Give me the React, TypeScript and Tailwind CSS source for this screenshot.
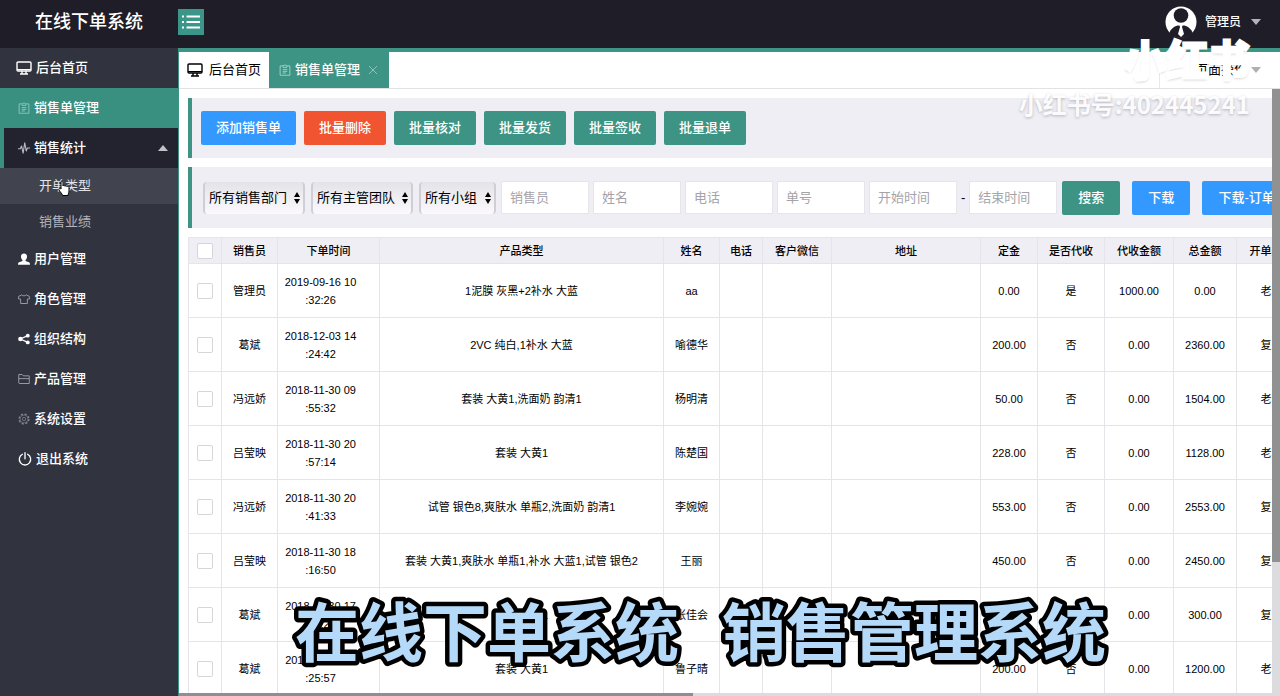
import React, { useState } from "react";
import clsx from "clsx";

type IconProps = { className?: string };

const MonitorIcon = ({ className }: IconProps) => (
  <svg className={className} viewBox="0 0 16 16" fill="none" stroke="currentColor" strokeWidth="1.4">
    <rect x="1" y="2" width="14" height="9" rx="1" />
    <path d="M1 9.6h14M6 11v2.4M10 11v2.4M4 14h8" />
  </svg>
);

const ClipboardIcon = ({ className }: IconProps) => (
  <svg className={className} viewBox="0 0 16 16" fill="none" stroke="currentColor" strokeWidth="1.2">
    <path d="M5 2.5H1.500v12.500h13V2.500H11" />
    <path d="M5.500 4.500V2h1.500L8 .8 9 2h1.500v2.500zM5 7.500h6M5 9.800h6M5 12h4" />
  </svg>
);

const PulseIcon = ({ className }: IconProps) => (
  <svg className={className} viewBox="0 0 16 16" fill="none" stroke="currentColor" strokeWidth="1.500" strokeLinejoin="round">
    <path d="M0 9h3l1.800-3.500L6.800 15 9 1l2 11 1.500-4H16" />
  </svg>
);

const UserIcon = ({ className }: IconProps) => (
  <svg className={className} viewBox="0 0 16 16" fill="currentColor">
    <path d="M8 .5C5.200.5 3.900 2.400 4 5c.1 2 .9 3.500 2 4.400v1.400L1.500 12.300C.5 12.700 0 13.600 0 15.500h16c0-1.900-.5-2.800-1.500-3.200L10 10.800V9.400c1.100-.9 1.900-2.400 2-4.400C12.100 2.400 10.800.5 8 .5z" />
  </svg>
);

const ShirtIcon = ({ className }: IconProps) => (
  <svg className={className} viewBox="0 0 16 16" fill="none" stroke="currentColor" strokeWidth="1.200" strokeLinejoin="round">
    <path d="M5 2.500L.8 4.500v3.500h2.700v6h9v-6h2.700V4.500L11 2.500C10 4.200 6 4.200 5 2.500z" />
  </svg>
);

const ShareIcon = ({ className }: IconProps) => (
  <svg className={className} viewBox="0 0 16 16" fill="currentColor">
    <path d="M3 8l10-4.500M3 8l10 4.500" stroke="currentColor" strokeWidth="1.800" />
    <circle cx="3.200" cy="8" r="3" />
    <circle cx="13" cy="3.500" r="2.600" />
    <circle cx="13" cy="12.500" r="2.600" />
  </svg>
);

const FolderIcon = ({ className }: IconProps) => (
  <svg className={className} viewBox="0 0 16 16" fill="none" stroke="currentColor" strokeWidth="1.200" strokeLinejoin="round">
    <path d="M1 13V2h4.500L7 3.800h8V14H2a1 1 0 0 1-1-1zM1 7.500h14" />
  </svg>
);

const GearIcon = ({ className }: IconProps) => (
  <svg className={className} viewBox="0 0 16 16" fill="none" stroke="currentColor">
    <circle cx="8" cy="8" r="6.500" strokeWidth="1.800" strokeDasharray="2.900 2.200" />
    <circle cx="8" cy="8" r="5.200" strokeWidth=".8" />
    <circle cx="8" cy="8" r="2.200" />
  </svg>
);

const PowerIcon = ({ className }: IconProps) => (
  <svg className={className} viewBox="0 0 16 16" fill="none" stroke="currentColor" strokeWidth="1.500" strokeLinecap="round">
    <path d="M5 2.600a6.500 6.500 0 1 0 6 0M8 .8v7" />
  </svg>
);

const ListIcon = ({ className }: IconProps) => (
  <svg className={className} viewBox="0 0 18 14" fill="none" stroke="currentColor" strokeWidth="1.800">
    <path d="M0 1.500h2M0 7h2M0 12.500h2M4.500 1.500H18M4.500 7H18M4.500 12.500H18" />
  </svg>
);

const AvatarIcon = ({ className }: IconProps) => (
  <svg className={className} viewBox="0 0 32 32">
    <circle cx="16" cy="16" r="15.500" fill="#fff" />
    <path d="M8 30c-2-1-3-2-3.500-3 1-4 4.500-6.500 8-7.500h7c3.500 1 7 3.500 8 7.500-.5 1-1.500 2-3.500 3-5 2.500-11 2.500-16 0z" fill="#1f1d28" />
    <circle cx="16" cy="9.500" r="7.300" fill="#1f1d28" />
    <path d="M14 18h4l-1 3 2 7-3 3-3-3 2-7z" fill="#fff" />
  </svg>
);

const HandCursor = ({ className }: IconProps) => (
  <svg className={className} viewBox="0 0 14 16" fill="#fff" stroke="#000" strokeWidth="1" strokeLinejoin="round">
    <path d="M4 9V2c0-1.500 2-1.500 2 0v4c0-1 2-1 2 .3 0-1 2-1 2 .4 0-1 2-.8 2 .4V11c0 2-1 2.500-1 4.500H5.500c0-1.500-2-3-3.500-5.500-.8-1.500.8-2 2-1z" />
  </svg>
);

const menu = [
  { label: "用户管理", icon: UserIcon, tone: "size-3 text-white" },
  { label: "角色管理", icon: ShirtIcon, tone: "size-3 text-[#a3a4ad]" },
  { label: "组织结构", icon: ShareIcon, tone: "size-3 text-white" },
  { label: "产品管理", icon: FolderIcon, tone: "size-3 text-[#a3a4ad]" },
  { label: "系统设置", icon: GearIcon, tone: "size-3 text-[#85868f]" },
  { label: "退出系统", icon: PowerIcon, tone: "size-3.5 text-white" },
];

const actions = [
  { label: "添加销售单", color: "bg-[#3399ff]" },
  { label: "批量删除", color: "bg-[#f05430]" },
  { label: "批量核对", color: "bg-[#3e9484]" },
  { label: "批量发货", color: "bg-[#3e9484]" },
  { label: "批量签收", color: "bg-[#3e9484]" },
  { label: "批量退单", color: "bg-[#3e9484]" },
];

const columns = [
  { label: "销售员", width: "w-14" },
  { label: "下单时间", width: "w-[102px]" },
  { label: "产品类型", width: "w-[284px]" },
  { label: "姓名", width: "w-14" },
  { label: "电话", width: "w-[43px]" },
  { label: "客户微信", width: "w-[69px]" },
  { label: "地址", width: "w-[149px]" },
  { label: "定金", width: "w-[57px]" },
  { label: "是否代收", width: "w-[67px]" },
  { label: "代收金额", width: "w-[69px]" },
  { label: "总金额", width: "w-[63px]" },
  { label: "开单类型", width: "w-[70px]" },
];

const orders = [
  ["管理员", "2019-09-16 10:32:26", "1泥膜 灰黑+2补水 大蓝", "aa", "", "", "", "0.00", "是", "1000.00", "0.00", "老单"],
  ["葛斌", "2018-12-03 14:24:42", "2VC 纯白,1补水 大蓝", "喻德华", "", "", "", "200.00", "否", "0.00", "2360.00", "复购"],
  ["冯远娇", "2018-11-30 09:55:32", "套装 大黄1,洗面奶 韵清1", "杨明清", "", "", "", "50.00", "否", "0.00", "1504.00", "老单"],
  ["吕莹映", "2018-11-30 20:57:14", "套装 大黄1", "陈楚国", "", "", "", "228.00", "否", "0.00", "1128.00", "老单"],
  ["冯远娇", "2018-11-30 20:41:33", "试管 银色8,爽肤水 单瓶2,洗面奶 韵清1", "李婉婉", "", "", "", "553.00", "否", "0.00", "2553.00", "复购"],
  ["吕莹映", "2018-11-30 18:16:50", "套装 大黄1,爽肤水 单瓶1,补水 大蓝1,试管 银色2", "王丽", "", "", "", "450.00", "否", "0.00", "2450.00", "复购"],
  ["葛斌", "2018-11-30 17:44:21", "套装 大黄1", "张佳会", "", "", "", "200.00", "否", "0.00", "300.00", "复购"],
  ["葛斌", "2018-11-30 16:25:57", "套装 大黄1", "鲁子晴", "", "", "", "200.00", "否", "0.00", "1200.00", "老单"],
];

function FilterSelect({ label, className }: { label: string; className?: string }) {
  return (
    <div className={clsx("relative h-8 shrink-0", className)}>
      <select
        aria-label={label}
        className="h-full w-full appearance-none rounded border-x-2 border-[#cfced4] bg-linear-to-b from-[#e4e3e7] to-[#fbf9fc] pl-1 text-[13px] text-black"
      >
        <option>{label}</option>
      </select>
      <svg className="pointer-events-none absolute top-2.5 right-1 h-3 w-2" viewBox="0 0 8 12">
        <path d="M4 0l3 5H1zM4 12L1 7h6z" />
      </svg>
    </div>
  );
}

function FilterInput({ placeholder }: { placeholder: string }) {
  return (
    <input
      type="text"
      aria-label={placeholder}
      placeholder={placeholder}
      className="h-[33px] w-[88px] shrink-0 border border-[#e6e5ea] bg-white px-2 text-[13px] placeholder:text-[#a5a3a8]"
    />
  );
}

function Header() {
  return (
    <header className="flex h-12 shrink-0 items-center bg-[#1f1d28] pr-[19px] text-white">
      <h1 className="w-[178px] pb-1 pl-[35px] text-lg font-medium">在线下单系统</h1>
      <button aria-label="菜单" className="mb-1 flex size-[26px] items-center justify-center bg-[#3a9688]">
        <ListIcon className="h-3.5 w-[18px]" />
      </button>
      <button className="mb-1 ml-auto flex items-center text-xs font-medium">
        <AvatarIcon className="mr-2 size-8" />
        管理员
        <span className="ml-2.5 border-x-[5px] border-t-[6px] border-x-transparent border-t-[#b5b4ba]" />
      </button>
    </header>
  );
}

function Sidebar() {
  return (
    <nav className="w-[178px] shrink-0 bg-[#31333f] text-[13px] font-medium text-white">
      <a href="#home" className="flex h-10 items-center gap-1 pl-4">
        <MonitorIcon className="size-4" />
        后台首页
      </a>
      <a href="#orders" className="flex h-10 items-center gap-1 bg-[#398f80] pl-[18px]">
        <ClipboardIcon className="size-3 text-[#8fcabf]" />
        销售单管理
      </a>
      <a href="#stats" className="flex h-10 items-center border-l-4 border-[#398f80] bg-[#22232e] pr-2.5 pl-3.5">
        <PulseIcon className="mr-1 size-3 text-[#b9bac2]" />
        销售统计
        <span className="ml-auto border-x-[5px] border-b-[6px] border-x-transparent border-b-[#c2c2c8]" />
      </a>
      <a href="#types" className="relative flex h-9 items-center bg-[#41434f] pl-[39px] font-normal text-[#e4e4e8]">
        开单类型
        <HandCursor className="absolute top-3 left-[57px] h-4 w-3.5" />
      </a>
      <a href="#results" className="flex h-[35px] items-center pl-[39px] font-normal text-[#b4b5bd]">
        销售业绩
      </a>
      {menu.map(({ label, icon: Icon, tone }) => (
        <a key={label} href="#" className="flex h-10 items-center gap-1 pl-[18px]">
          <Icon className={tone} />
          {label}
        </a>
      ))}
    </nav>
  );
}

function Tabs() {
  return (
    <div className="flex h-[41px] shrink-0 border-t-4 border-b border-t-[#3e9484] border-b-[#e2e2e4] text-[13px]">
      <button className="flex w-[90px] items-center gap-1.5 pl-2">
        <MonitorIcon className="size-4" />
        后台首页
      </button>
      <button className="flex w-[120px] items-center bg-[#3e9484] pl-2.5 font-medium text-white">
        <ClipboardIcon className="mr-1 size-3 text-[#a4d5cc]" />
        销售单管理
        <svg className="ml-2 size-2.5 text-[#8cc5ba]" viewBox="0 0 10 10" stroke="currentColor">
          <path d="M1 1l8 8M9 1L1 9" />
        </svg>
      </button>
      <button className="ml-auto flex w-[121px] items-center border-l border-[#e8e8e8] pl-[35px]">
        页面操作
        <span className="ml-1 border-x-[5px] border-t-[6px] border-x-transparent border-t-[#b0b0b0]" />
      </button>
    </div>
  );
}

function Filters() {
  const button = "h-[34px] shrink-0 rounded-xs px-4 text-[13px] font-medium text-white";
  return (
    <form className="flex h-[61px] items-center overflow-hidden border-l-4 border-[#3e9484] bg-[#efeef5] pl-[11px] whitespace-nowrap">
      <div className="flex gap-1.5 pr-[5px]">
        <FilterSelect label="所有销售部门" className="w-[102px]" />
        <FilterSelect label="所有主管团队" className="w-[102px]" />
        <FilterSelect label="所有小组" className="w-[77px]" />
      </div>
      <div className="flex items-center gap-1">
        <FilterInput placeholder="销售员" />
        <FilterInput placeholder="姓名" />
        <FilterInput placeholder="电话" />
        <FilterInput placeholder="单号" />
        <FilterInput placeholder="开始时间" />
        <span className="text-[13px]">-</span>
        <FilterInput placeholder="结束时间" />
      </div>
      <div className="flex gap-3 pl-[5px]">
        <button type="button" className={clsx(button, "bg-[#3e9484]")}>搜索</button>
        <button type="button" className={clsx(button, "bg-[#3399ff]")}>下载</button>
        <button type="button" className={clsx(button, "bg-[#3399ff]")}>下载-订单</button>
      </div>
    </form>
  );
}

function OrderTable() {
  const [checked, setChecked] = useState<number[]>([]);
  const box = "block size-4 appearance-none rounded-xs border border-[#d8d4d8] bg-white checked:bg-[#3e9484]";

  const toggle = (i: number) =>
    setChecked(checked.includes(i) ? checked.filter((c) => c !== i) : [...checked, i]);

  // the time breaks after the hour
  const renderTime = (time: string) => (
    <>
      {time.slice(0, 13)}
      <wbr />
      {time.slice(13)}
    </>
  );

  return (
    <table className="w-[1118px] table-fixed border-collapse text-center text-[11px] leading-[18px] text-black">
      <thead className="bg-[#efeef5]">
        <tr className="h-[26px]">
          <th className="w-[33px] border border-[#e6e4e8] pl-2">
            <input
              type="checkbox"
              aria-label="全选"
              className={box}
              checked={checked.length === orders.length}
              onChange={(e) => setChecked(e.target.checked ? orders.map((_, i) => i) : [])}
            />
          </th>
          {columns.map((col) => (
            <th key={col.label} className={clsx("border border-[#e6e4e8] font-medium whitespace-nowrap", col.width)}>
              {col.label}
            </th>
          ))}
        </tr>
      </thead>
      <tbody>
        {orders.map((order, i) => (
          <tr key={i} className="h-[54px]">
            <td className="border border-[#e6e4e8] pl-2">
              <input
                type="checkbox"
                aria-label={order[1]}
                className={box}
                checked={checked.includes(i)}
                onChange={() => toggle(i)}
              />
            </td>
            {order.map((cell, j) => (
              <td key={j} className={clsx("border border-[#e6e4e8]", j === 1 && "pr-5 pl-1")}>
                {j === 1 ? renderTime(cell) : cell}
              </td>
            ))}
          </tr>
        ))}
      </tbody>
    </table>
  );
}

function Watermark() {
  return (
    <div className="pointer-events-none absolute top-7 right-[30px] text-right font-['Noto_Sans_CJK_SC',sans-serif] font-bold text-white">
      <p className="text-[42px] leading-[60px] [-webkit-text-stroke:3px_#fff] [text-shadow:0_2px_3px_rgba(0,0,0,0.2)]">
        小红书
      </p>
      <p className="text-2xl leading-8 opacity-80 [text-shadow:0_1px_3px_rgba(0,0,0,0.3)]">小红书号:402445241</p>
    </div>
  );
}

function Caption() {
  return (
    <svg
      className="pointer-events-none absolute bottom-3 left-[287px] h-24 w-[830px] text-[64px] font-bold"
      fill="#b5daf9"
      stroke="#000"
      strokeWidth="9"
      strokeLinejoin="round"
      paintOrder="stroke"
    >
      <text x="8" y="68">在线下单系统</text>
      <text x="435" y="68">销售管理系统</text>
    </svg>
  );
}

export default function App() {
  return (
    <div className="relative flex h-screen flex-col overflow-hidden bg-white font-['Liberation_Sans','Noto_Sans_CJK_SC',sans-serif]">
      <Header />
      <div className="flex min-h-0 flex-1">
        <Sidebar />
        <main className="flex min-w-0 flex-1 flex-col border-l border-[#3e9484]">
          <Tabs />
          <div className="flex min-h-0 flex-1">
            <div className="flex min-w-0 flex-1 flex-col">
              <div className="flex min-h-0 flex-1 flex-col gap-[9px] overflow-hidden pt-[9px] pl-[9px]">
                <div className="flex h-[60px] shrink-0 items-center gap-2 border-l-4 border-[#3e9484] bg-[#efeef5] pl-[9px]">
                  {actions.map(({ label, color }) => (
                    <button
                      key={label}
                      className={clsx("h-[34px] rounded-xs px-[15px] text-[13px] font-medium text-white", color)}
                    >
                      {label}
                    </button>
                  ))}
                </div>
                <div className="shrink-0">
                  <Filters />
                </div>
                <OrderTable />
              </div>
              <div className="h-[3px] bg-[#dcdcdf]">
                <div className="h-full w-[47%] bg-[#8f8f91]" />
              </div>
            </div>
            <div className="w-2 bg-[#dcdcdf]">
              <div className="h-[78%] bg-[#919191]" />
            </div>
          </div>
        </main>
      </div>
      <Watermark />
      <Caption />
    </div>
  );
}
